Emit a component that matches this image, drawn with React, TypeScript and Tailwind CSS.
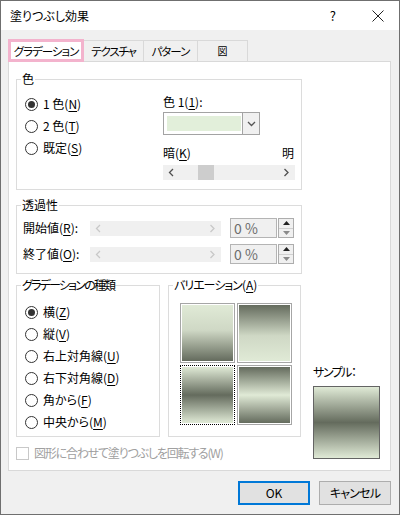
import React from "react";

function U({ c }: { c: string }) {
  return <span className="underline underline-offset-[2px]">{c}</span>;
}

function Radio({ checked, children }: { checked?: boolean; children: React.ReactNode }) {
  return (
    <div className="flex h-[22px] items-center gap-[5px]">
      <span className="flex h-[13px] w-[13px] items-center justify-center rounded-full border border-[#333] bg-white">
        {checked && <span className="h-[7px] w-[7px] rounded-full bg-[#333]" />}
      </span>
      <span className="whitespace-nowrap">{children}</span>
    </div>
  );
}

function Chevron({ dir, color }: { dir: "left" | "right" | "down"; color: string }) {
  const d = dir === "left" ? "M5 1 L1.5 4.5 L5 8" : dir === "right" ? "M1.5 1 L5 4.5 L1.5 8" : "M1 2 L4.5 5.5 L8 2";
  const w = dir === "down" ? 9 : 7;
  const h = dir === "down" ? 7 : 9;
  return (
    <svg width={w} height={h} viewBox={`0 0 ${w} ${h}`}>
      <path d={d} fill="none" stroke={color} strokeWidth="1.3" />
    </svg>
  );
}

function ScrollBar({ width, thumb, disabled }: { width: string; thumb?: boolean; disabled?: boolean }) {
  const c = disabled ? "#c8c8c8" : "#505050";
  return (
    <div className={`flex h-[15px] items-center bg-[#f0f0f0] ${width}`}>
      <div className="flex h-full w-[17px] items-center justify-center">
        <Chevron dir="left" color={c} />
      </div>
      <div className="flex h-full flex-1 items-center">
        {thumb && <div className="ml-[18px] h-full w-[16px] bg-[#cdcdcd]" />}
      </div>
      <div className="flex h-full w-[17px] items-center justify-center">
        <Chevron dir="right" color={c} />
      </div>
    </div>
  );
}

function Spinner() {
  return (
    <div className="ml-[1px] flex h-[20px] w-[16px] flex-col border border-[#adadad] bg-[#f0f0f0]">
      <div className="flex flex-1 items-center justify-center border-b border-[#d0d0d0]">
        <svg width="7" height="4" viewBox="0 0 7 4">
          <path d="M0 4 L3.5 0 L7 4 Z" fill="#222" />
        </svg>
      </div>
      <div className="flex flex-1 items-center justify-center">
        <svg width="7" height="4" viewBox="0 0 7 4">
          <path d="M0 0 L3.5 4 L7 0 Z" fill="#8a8a8a" />
        </svg>
      </div>
    </div>
  );
}

function TransRow({ label, u }: { label: string; u: string }) {
  return (
    <div className="flex h-[24px] items-center">
      <span className="w-[67px] whitespace-nowrap">
        {label}(<U c={u} />):
      </span>
      <ScrollBar width="w-[131px]" disabled />
      <div className="ml-[9px] flex h-[20px] w-[47px] items-center border border-[#b4b4b4] bg-[#f0f0f0] pl-[3px] text-[14px] text-[#6d6d6d]">
        0 %
      </div>
      <Spinner />
    </div>
  );
}

function Cell({ bg, focused }: { bg: string; focused?: boolean }) {
  return (
    <div
      className={`h-[60px] w-[55px] p-[1px] ${
        focused ? "border border-dotted border-black bg-white" : "border border-[#a6a6a6] bg-white"
      }`}
    >
      <div className={`h-full w-full ${bg}`} />
    </div>
  );
}

function Legend({ children }: { children: React.ReactNode }) {
  return <legend className="ml-[4px] whitespace-nowrap px-[1px] leading-[16px]">{children}</legend>;
}

export default function App() {
  return (
    <div className="flex h-[515px] w-[400px] flex-col border border-[#6f6f6f] bg-[#f0f0f0] font-['Noto_Sans_CJK_JP','Noto_Sans',sans-serif] text-[12px] leading-[16px] text-black [font-feature-settings:'palt'_1]">
      {/* Title bar */}
      <div className="flex h-[29px] shrink-0 items-center bg-white pl-[9px]">
        <span className="text-[12px]">塗りつぶし効果</span>
        <span className="ml-auto mr-[36px] text-[13px]">?</span>
        <svg width="12" height="12" viewBox="0 0 12 12" className="mr-[15px]">
          <path d="M0.5 0.5 L11.5 11.5 M11.5 0.5 L0.5 11.5" stroke="#222" strokeWidth="1" />
        </svg>
      </div>

      <div className="flex flex-1 flex-col pl-[7px] pr-[8px] pt-[8px]">
        {/* Tabs */}
        <div className="flex h-[23px] items-end whitespace-nowrap">
          <div className="relative z-10 mb-[-1px] flex h-[23px] w-[76px] items-center justify-center border-[3px] border-[#f3b3cd] bg-white text-[11.5px] tracking-[-1px]">
            グラデーション
          </div>
          <div className="flex h-[21px] w-[59px] items-center justify-center border-t border-[#d9d9d9] text-[11.5px] tracking-[-1.2px]">テクスチャ</div>
          <div className="flex h-[21px] w-[54px] items-center justify-center border-l border-t border-[#d9d9d9] text-[11.5px] tracking-[-1px]">パターン</div>
          <div className="flex h-[21px] w-[51px] items-center justify-center border-l border-r border-t border-[#d9d9d9] text-[10px]">図</div>
        </div>

        {/* Panel */}
        <div className="flex h-[410px] flex-col border border-[#d9d9d9] bg-white px-[7px] pt-[9px]">
          <fieldset className="w-[286px] border border-[#dcdcdc]">
            <Legend>色</Legend>
            <div className="flex h-[102px] pl-[8px] pt-[6px]">
              <div className="w-[138px]">
                <Radio checked>
                  1 色(<U c="N" />)
                </Radio>
                <Radio>
                  2 色(<U c="T" />)
                </Radio>
                <Radio>
                  既定(<U c="S" />)
                </Radio>
              </div>
              <div className="flex w-[132px] flex-col">
                <div className="h-[18px] leading-[18px]">
                  色 1(<U c="1" />):
                </div>
                <div className="mt-[1px] flex h-[23px] w-[97px] items-center border border-[#a3a3a3] bg-white">
                  <div className="ml-[3px] h-[15px] w-[74px] bg-[#e2efda]" />
                  <div className="ml-auto flex h-full w-[17px] items-center justify-center border-l border-[#a3a3a3] bg-[#f0f0f0]">
                    <Chevron dir="down" color="#555" />
                  </div>
                </div>
                <div className="mt-[9px] flex h-[18px] items-center justify-between pr-[1px]">
                  <span>
                    暗(<U c="K" />)
                  </span>
                  <span>明</span>
                </div>
                <div className="mt-[3px]">
                  <ScrollBar width="w-[132px]" thumb />
                </div>
              </div>
            </div>
          </fieldset>

          <fieldset className="mt-[7px] w-[286px] border border-[#dcdcdc]">
            <Legend>透過性</Legend>
            <div className="flex h-[60px] flex-col gap-[2px] pl-[6px] pt-[3px]">
              <TransRow label="開始値" u="R" />
              <TransRow label="終了値" u="O" />
            </div>
          </fieldset>

          <div className="mt-[3px] flex">
            <div className="flex w-[285px] flex-col">
              <div className="flex gap-[8px]">
                <fieldset className="w-[144px] border border-[#dcdcdc]">
                  <Legend>
                    <span className="tracking-[-1.8px]">グラデーションの種類</span>
                  </Legend>
                  <div className="h-[143px] pl-[8px] pt-[8px]">
                    <Radio checked>
                      横(<U c="Z" />)
                    </Radio>
                    <Radio>
                      縦(<U c="V" />)
                    </Radio>
                    <Radio>
                      右上対角線(<U c="U" />)
                    </Radio>
                    <Radio>
                      右下対角線(<U c="D" />)
                    </Radio>
                    <Radio>
                      角から(<U c="F" />)
                    </Radio>
                    <Radio>
                      中央から(<U c="M" />)
                    </Radio>
                  </div>
                </fieldset>
                <fieldset className="w-[133px] border border-[#dcdcdc]">
                  <Legend>
                    <span className="tracking-[-1px]">バリエーション</span>(<U c="A" />)
                  </Legend>
                  <div className="h-[143px] pl-[11px] pt-[10px]">
                    <div className="grid w-[112px] grid-cols-2 gap-[2px]">
                      <Cell bg="bg-[linear-gradient(to_bottom,#e0ead6_0%,#cfd8c5_45%,#646b5d_100%)]" />
                      <Cell bg="bg-[linear-gradient(to_bottom,#646b5d_0%,#cfd8c5_55%,#e0ead6_100%)]" />
                      <Cell focused bg="bg-[linear-gradient(to_bottom,#e0ead6_0%,#646b5d_50%,#e0ead6_100%)]" />
                      <Cell bg="bg-[linear-gradient(to_bottom,#646b5d_0%,#e0ead6_50%,#646b5d_100%)]" />
                    </div>
                  </div>
                </fieldset>
              </div>
              <div className="mt-[8px] flex h-[16px] items-center gap-[5px] whitespace-nowrap text-[#a0a0a0]">
                <span className="h-[13px] w-[13px] shrink-0 border border-[#c8c8c8] bg-white" />
                <span className="tracking-[-1.2px]">図形に合わせて塗りつぶしを回転する(W)</span>
              </div>
            </div>
            <div className="ml-[12px] flex flex-col justify-end pb-[2px]">
              <div className="h-[16px] whitespace-nowrap tracking-[-1.5px]">サンプル：</div>
              <div className="mt-[6px] h-[73px] w-[67px] border border-[#646464] bg-[linear-gradient(to_bottom,#e0ead6_0%,#646b5d_50%,#e0ead6_100%)]" />
            </div>
          </div>
        </div>

        {/* Buttons */}
        <div className="mt-[10px] flex justify-end gap-[9px]">
          <button className="flex h-[24px] w-[72px] items-center justify-center border-2 border-[#0078d7] bg-[#e1e1e1]">
            OK
          </button>
          <button className="flex h-[24px] w-[72px] items-center justify-center border border-[#adadad] bg-[#e1e1e1] tracking-[-0.8px]">
            キャンセル
          </button>
        </div>
      </div>
    </div>
  );
}
